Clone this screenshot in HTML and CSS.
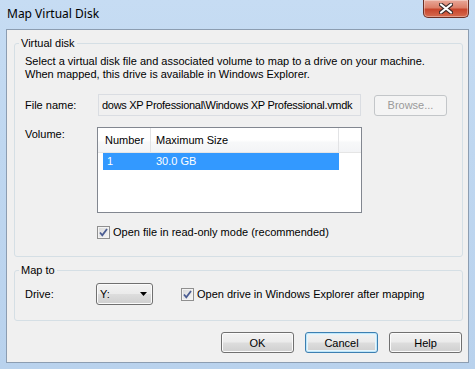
FILE: index.html
```html
<!DOCTYPE html>
<html lang="en">
<head>
  <meta charset="UTF-8">
  <title>Map Virtual Disk</title>
  <link rel="stylesheet" href="styles.css">
</head>
<body>
  <div class="window">
    <div class="titlebar">
      <span class="title">Map Virtual Disk</span>
      <div class="close">
        <svg width="14" height="11" viewBox="0 0 14 11">
          <path d="M2 1.5 L12 9.5 M12 1.5 L2 9.5" stroke="#3b2a2a" stroke-width="4.2" stroke-linecap="round"/>
          <path d="M2 1.5 L12 9.5 M12 1.5 L2 9.5" stroke="#fff" stroke-width="2.2" stroke-linecap="round"/>
        </svg>
      </div>
    </div>
    <div class="client">
      <fieldset class="group group-disk">
        <legend>Virtual disk</legend>
        <p class="intro">Select a virtual disk file and associated volume to map to a drive on your machine.<br>When mapped, this drive is available in Windows Explorer.</p>
        <div class="row row-file">
          <label class="field-label">File name:</label>
          <div class="path-box">
            <span class="path-text">dows XP Professional\Windows XP Professional.vmdk</span>
          </div>
          <button type="button" class="btn btn-disabled">Browse...</button>
        </div>
        <div class="row row-volume">
          <label class="field-label volume-label">Volume:</label>
          <div class="listview">
            <div class="lv-header">
              <div class="lv-col col-num">Number</div>
              <div class="lv-col col-size">Maximum Size</div>
            </div>
            <div class="lv-row selected">
              <span class="cell-num">1</span>
              <span class="cell-size">30.0 GB</span>
            </div>
          </div>
        </div>
        <div class="row row-check">
          <label class="check">
            <span class="box"><svg width="11" height="11" viewBox="0 0 11 11"><path d="M2 5.5 L4.3 8.3 L9 2" fill="none" stroke="#4a5c92" stroke-width="1.8"/></svg></span>
            Open file in read-only mode (recommended)
          </label>
        </div>
      </fieldset>
      <fieldset class="group group-map">
        <legend>Map to</legend>
        <div class="row row-drive">
          <label class="field-label">Drive:</label>
          <div class="combo">
            <span>Y:</span>
            <svg width="7" height="4" viewBox="0 0 7 4"><path d="M0 0 H7 L3.5 4 Z" fill="#000"/></svg>
          </div>
          <label class="check check-drive">
            <span class="box"><svg width="11" height="11" viewBox="0 0 11 11"><path d="M2 5.5 L4.3 8.3 L9 2" fill="none" stroke="#4a5c92" stroke-width="1.8"/></svg></span>
            Open drive in Windows Explorer after mapping
          </label>
        </div>
      </fieldset>
      <div class="buttons">
        <button type="button" class="btn">OK</button>
        <button type="button" class="btn btn-default">Cancel</button>
        <button type="button" class="btn">Help</button>
      </div>
    </div>
  </div>
</body>
</html>
```

FILE: styles.css
```css
/* Dialog window */
body {
  margin: 0;
  font-family: "Liberation Sans", Arial, sans-serif;
  font-size: 11px;
  color: #000;
}
.window {
  width: 475px;
  height: 369px;
  background: linear-gradient(180deg, #c6dcf3 0%, #bfd7f0 40%, #b9d2ed 100%);
  display: flex;
  flex-direction: column;
}
.titlebar {
  height: 29px;
  display: flex;
  justify-content: space-between;
  align-items: flex-start;
}
.title {
  font-family: "Noto Sans", sans-serif;
  font-size: 12px;
  line-height: 16px;
  margin: 6px 0 0 7px;
}
.close {
  width: 46px;
  height: 18px;
  margin-right: 6px;
  box-sizing: border-box;
  border: 1px solid #6b2f25;
  border-top: none;
  border-radius: 0 0 5px 5px;
  background: linear-gradient(180deg, #e9a899 0%, #dc7f69 45%, #c8452c 55%, #d66b4f 100%);
  box-shadow: inset 0 0 0 1px rgba(255,255,255,0.35);
  display: flex;
  justify-content: center;
  align-items: center;
}
/* Client area */
.client {
  margin: 0 6px 6px 6px;
  height: 334px;
  box-sizing: border-box;
  border: 1px solid #8c9db1;
  background: #f0f0f0;
  padding: 7px 5px 0 7px;
}
.group {
  margin: 0;
  width: 449px;
  box-sizing: border-box;
  border: 1px solid #d5dfe5;
  border-radius: 3px;
  min-width: 0;
}
.group legend {
  padding: 0 2px;
  margin-left: -6px;
  line-height: 13px;
}
.group-disk {
  padding: 5px 10px 17px 10px;
}
.group-map {
  margin-top: 7px;
  padding: 6px 10px 15px 10px;
}
.intro {
  margin: 0;
  line-height: 13px;
}
.row {
  display: flex;
  align-items: center;
}
.field-label {
  width: 72px;
  flex: none;
  line-height: 13px;
}
.row-file {
  margin-top: 13px;
  height: 22px;
}
.path-box {
  margin-left: 1px;
  width: 263px;
  height: 22px;
  box-sizing: border-box;
  border: 1px solid #dadde2;
  background: #f0f0f0;
  display: flex;
  align-items: center;
  padding: 0 4px 0 3px;
  overflow: hidden;
}
.path-text {
  white-space: nowrap;
  letter-spacing: -0.3px;
}
/* Buttons */
.btn {
  width: 73px;
  height: 21px;
  padding: 0;
  font-family: inherit;
  font-size: 11px;
  color: #000;
  border: 1px solid #707070;
  border-radius: 3px;
  background: linear-gradient(180deg, #f2f2f2 0%, #ebebeb 48%, #dddddd 52%, #cfcfcf 100%);
  box-shadow: inset 0 0 0 1px #fbfbfb;
}
.row-file .btn {
  margin-left: 13px;
}
.btn-disabled {
  color: #9a9a9a;
  border-color: #c3c6c9;
  background: #f4f4f4;
  box-shadow: none;
}
.btn-default {
  border-color: #3c7fb1;
  box-shadow: inset 0 0 0 1px #bfe6f9, inset 0 0 0 2px #e6f5fc;
}
/* List view */
.row-volume {
  margin-top: 11px;
  align-items: flex-start;
}
.volume-label {
  margin-top: 1px;
}
.listview {
  width: 265px;
  height: 86px;
  box-sizing: border-box;
  border: 1px solid #828790;
  background: #fff;
}
.lv-header {
  display: flex;
  height: 25px;
  box-sizing: border-box;
  border-bottom: 1px solid #e5e5e5;
  background: linear-gradient(180deg, #fff 0%, #fff 50%, #f7f8f9 60%, #f3f4f6 100%);
}
.lv-col {
  box-sizing: border-box;
  line-height: 24px;
  border-right: 1px solid #e2e3e5;
}
.col-num {
  width: 53px;
  padding-left: 7px;
}
.col-size {
  width: 188px;
  padding-left: 5px;
}
.lv-row {
  display: flex;
  margin-left: 5px;
  width: 236px;
  height: 17px;
  line-height: 17px;
}
.lv-row.selected {
  background: #3399ff;
  color: #fff;
}
.cell-num {
  width: 48px;
  padding-left: 4px;
  box-sizing: border-box;
}
.cell-size {
  padding-left: 5px;
}
/* Checkboxes */
.row-check {
  margin-top: 13px;
  height: 13px;
  padding-left: 72px;
}
.check {
  display: flex;
  align-items: center;
  gap: 3px;
  line-height: 13px;
  white-space: nowrap;
}
.box {
  width: 13px;
  height: 13px;
  box-sizing: border-box;
  border: 1px solid #8f8f8f;
  background: linear-gradient(135deg, #d8d8d8 0%, #f6f6f6 100%);
  box-shadow: inset 0 0 0 1px #f3f3f3;
  display: flex;
  justify-content: center;
  align-items: center;
}
/* Map to */
.row-drive {
  height: 22px;
}
.combo {
  margin-left: -1px;
  width: 57px;
  height: 22px;
  box-sizing: border-box;
  border: 1px solid #707070;
  border-radius: 3px;
  background: linear-gradient(180deg, #f2f2f2 0%, #ebebeb 48%, #dddddd 52%, #cfcfcf 100%);
  box-shadow: inset 0 0 0 1px #fbfbfb;
  display: flex;
  align-items: center;
  justify-content: space-between;
  padding: 0 5px 0 3px;
}
.check-drive {
  margin-left: 28px;
}
.buttons {
  display: flex;
  justify-content: flex-end;
  gap: 11px;
  width: 449px;
  box-sizing: border-box;
  padding-right: 1px;
  margin-top: 11px;
}
```
